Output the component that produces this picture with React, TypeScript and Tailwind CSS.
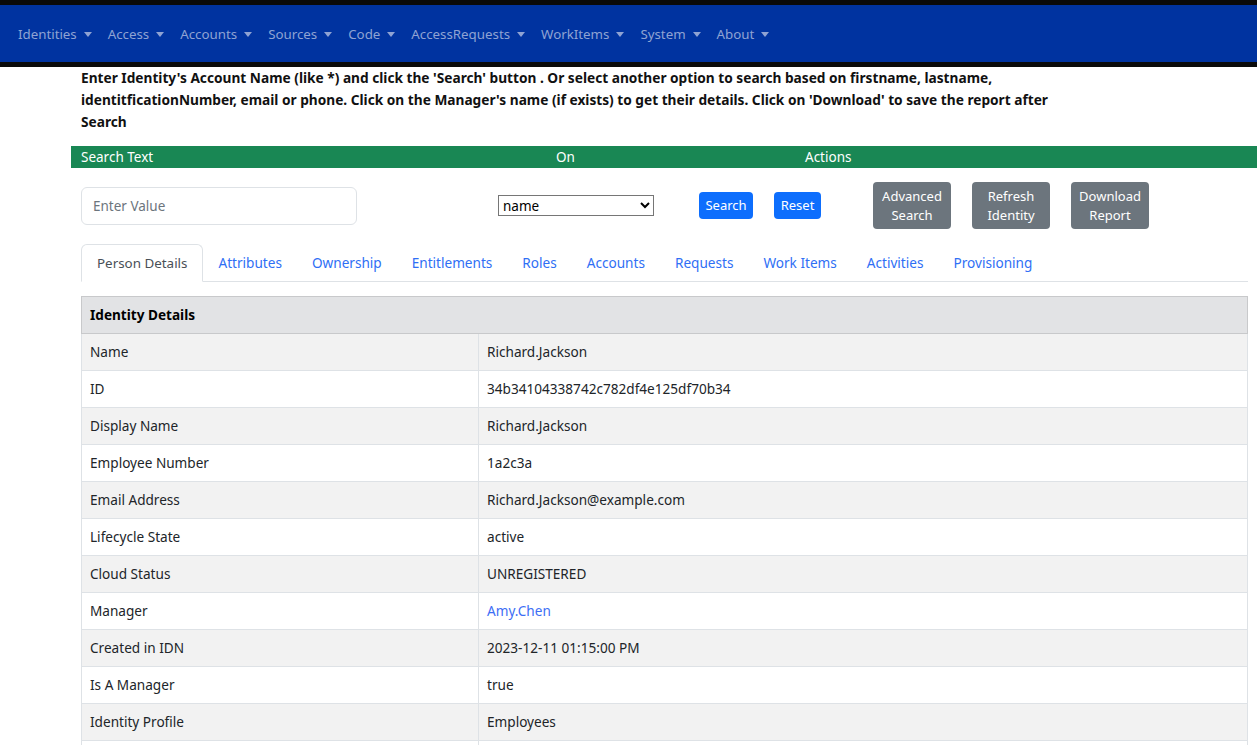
import React from "react";

const navItems = ["Identities", "Access", "Accounts", "Sources", "Code", "AccessRequests", "WorkItems", "System", "About"];
const tabs = ["Person Details", "Attributes", "Ownership", "Entitlements", "Roles", "Accounts", "Requests", "Work Items", "Activities", "Provisioning"];
const rows: [string, string, boolean?][] = [
  ["Name", "Richard.Jackson"],
  ["ID", "34b34104338742c782df4e125df70b34"],
  ["Display Name", "Richard.Jackson"],
  ["Employee Number", "1a2c3a"],
  ["Email Address", "Richard.Jackson@example.com"],
  ["Lifecycle State", "active"],
  ["Cloud Status", "UNREGISTERED"],
  ["Manager", "Amy.Chen", true],
  ["Created in IDN", "2023-12-11 01:15:00 PM"],
  ["Is A Manager", "true"],
  ["Identity Profile", "Employees"],
  ["\u00a0", "\u00a0"],
];

export default function App() {
  return (
    <div className="min-h-screen bg-white text-[#212529]" style={{ fontFamily: '"Noto Sans", "Open Sans", Arial, sans-serif' }}>
      <div className="h-[5px] bg-[#0a0a0a]" />
      <nav className="h-[57px] bg-[#0033a0] flex items-center pl-[10px] pt-[2px]">
        <ul className="flex items-center">
          {navItems.map((n) => (
            <li key={n} className="px-2 flex items-center text-[13.3px] text-[#8fa3d3]">
              <span>{n}</span>
              <span className="ml-[7px] inline-block w-0 h-0 border-l-[4px] border-r-[4px] border-t-[5px] border-l-transparent border-r-transparent border-t-[#8fa3d3]" />
            </li>
          ))}
        </ul>
      </nav>
      <div className="h-[5px] bg-[#0a0a0a]" />

      <main className="ml-[71px]">
        <p className="pl-[10px] max-w-[1000px] text-[13.7px] font-bold leading-[22px] text-[#111]">
          Enter Identity's Account Name (like *) and click the 'Search' button . Or select another option to search based on firstname, lastname, identitficationNumber, email or phone. Click on the Manager's name (if exists) to get their details. Click on 'Download' to save the report after Search
        </p>

        <div className="mt-[13px] h-[22px] bg-[#198754] text-white text-[13.5px] flex items-center">
          <div className="w-[485px] pl-[10px]">Search Text</div>
          <div className="w-[249px]">On</div>
          <div>Actions</div>
        </div>

        <div className="flex items-start pl-[10px] pt-[14px]">
          <input
            placeholder="Enter Value"
            className="mt-[5px] w-[276px] h-[38px] rounded-[6px] border border-[#dee2e6] px-[11px] text-[13.5px] placeholder:text-[#6c757d] outline-none"
          />
          <select className="ml-[141px] mt-[13px] w-[156px] h-[21px] border border-[#767676] text-[13.5px] text-black bg-white">
            <option>name</option>
          </select>
          <button className="ml-[45px] mt-[10px] w-[54px] h-[27px] rounded-[4px] bg-[#0d6efd] text-white text-[13px]">Search</button>
          <button className="ml-[21px] mt-[10px] w-[47px] h-[27px] rounded-[4px] bg-[#0d6efd] text-white text-[13px]">Reset</button>
          <button className="ml-[52px] w-[78px] h-[47px] rounded-[4px] bg-[#6c757d] text-white text-[13px] leading-[19px]">Advanced<br />Search</button>
          <button className="ml-[21px] w-[78px] h-[47px] rounded-[4px] bg-[#6c757d] text-white text-[13px] leading-[19px]">Refresh<br />Identity</button>
          <button className="ml-[21px] w-[78px] h-[47px] rounded-[4px] bg-[#6c757d] text-white text-[13px] leading-[19px]">Download<br />Report</button>
        </div>

        <div className="pl-[10px] pr-[9px] mt-[15px]">
          <div className="flex border-b border-[#dee2e6] h-[38px]">
            {tabs.map((t, i) => (
              <div
                key={t}
                className={
                  i === 0
                    ? "px-[15px] h-[38px] flex items-center text-[13.4px] text-[#495057] bg-white border border-[#dee2e6] border-b-white rounded-t-[6px] -mb-px"
                    : "px-[15px] h-[38px] flex items-center text-[13.6px] text-[#2f6ff5]"
                }
              >
                {t}
              </div>
            ))}
          </div>

          <table className="mt-[14px] w-full border-collapse text-[13.6px]">
            <thead>
              <tr className="bg-[#e2e3e5]">
                <th colSpan={2} className="text-left font-bold px-2 h-[37px] border border-[#c8c9cb] text-black">Identity Details</th>
              </tr>
            </thead>
            <tbody>
              {rows.map(([k, v, link], i) => (
                <tr key={i} className={i % 2 === 0 ? "bg-[#f2f2f2]" : "bg-white"}>
                  <td className="w-[397px] h-[37px] px-2 border border-[#dee2e6]">{k}</td>
                  <td className={"h-[37px] px-2 border border-[#dee2e6] " + (link ? "text-[#3d6ef5]" : "")}>{v}</td>
                </tr>
              ))}
            </tbody>
          </table>
        </div>
      </main>
    </div>
  );
}
